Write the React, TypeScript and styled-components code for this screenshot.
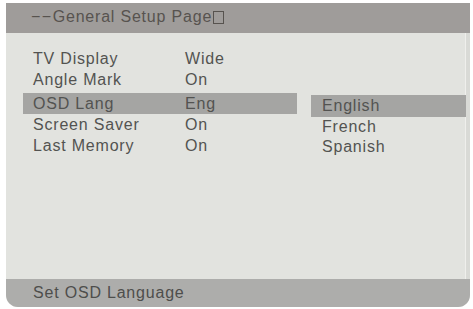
import styled, { createGlobalStyle } from "styled-components"

const GlobalStyle = createGlobalStyle`
  html, body {
    margin: 0;
    padding: 0;
    background: #ffffff;
  }
  body {
    font-family: "Liberation Sans", Arial, sans-serif;
  }
`

interface Item {
  label: string;
  value: string;
}

const items: Item[] = [
  { label: "TV Display", value: "Wide" },
  { label: "Angle Mark", value: "On" },
  { label: "OSD Lang", value: "Eng" },
  { label: "Screen Saver", value: "On" },
  { label: "Last Memory", value: "On" },
]

const options = ["English", "French", "Spanish"]

const App = () => {
  return (
    <>
      <GlobalStyle />
      <Page>
        <Screen>
          <Header>
            <Dashes>−−</Dashes>General Setup Page<Box />
          </Header>
          <Body>
            <Menu>
              {items.map((it, i) => (
                <Row key={it.label} selected={i === 2}>
                  <Label>{it.label}</Label>
                  <Value>{it.value}</Value>
                </Row>
              ))}
            </Menu>
            <Sub>
              {options.map((o, i) => (
                <Option key={o} selected={i === 0}>{o}</Option>
              ))}
            </Sub>
          </Body>
          <Footer>Set OSD Language</Footer>
        </Screen>
      </Page>
    </>
  )
}

export default App

const Page = styled.div`
  width: 473px;
  height: 309px;
  padding: 3px 3px 2px 6px;
  box-sizing: border-box;
`

const Screen = styled.div`
  width: 464px;
  height: 304px;
  display: flex;
  flex-direction: column;
  background: #e2e3df;
  border-radius: 0 0 12px 12px;
  overflow: hidden;
  color: #535351;
  font-size: 16px;
  letter-spacing: 0.8px;
`

const Header = styled.div`
  height: 30px;
  flex: none;
  display: flex;
  align-items: center;
  padding-left: 25px;
  padding-bottom: 2px;
  box-sizing: border-box;
  background: #9f9c9a;
  color: #57534f;
`

const Dashes = styled.span`
  letter-spacing: 1.5px;
`

// the broken glyph box the OSD shows after the title
const Box = styled.span`
  display: inline-block;
  width: 9px;
  height: 11px;
  margin-left: 1px;
  border: 1px solid #57534f;
`

const Body = styled.div`
  flex: 1;
  display: flex;
  padding: 15px 0 0 17px;
  border-right: 4px solid #d9dad6;
  box-shadow: inset -1px 0 0 #efefec;
`

const Menu = styled.div`
  width: 274px;
  display: flex;
  flex-direction: column;
`

const Row = styled.div<{ selected?: boolean }>`
  height: 21px;
  display: flex;
  align-items: center;
  padding-left: 10px;
  margin-top: ${p => (p.selected ? "3px" : "0")};
  background: ${p => (p.selected ? "#a5a5a3" : "transparent")};
`

const Label = styled.span`
  width: 152px;
`

const Value = styled.span``

const Sub = styled.div`
  margin-left: 14px;
  padding-top: 47px;
  flex: 1;
  display: flex;
  flex-direction: column;
`

const Option = styled.div<{ selected?: boolean }>`
  height: 20px;
  display: flex;
  align-items: center;
  padding-left: 11px;
  background: ${p => (p.selected ? "#a5a5a3" : "transparent")};
  &:first-child {
    height: 22px;
  }
`

const Footer = styled.div`
  height: 28px;
  flex: none;
  display: flex;
  align-items: center;
  padding-left: 27px;
  background: #adadab;
  color: #4e4e4c;
`
